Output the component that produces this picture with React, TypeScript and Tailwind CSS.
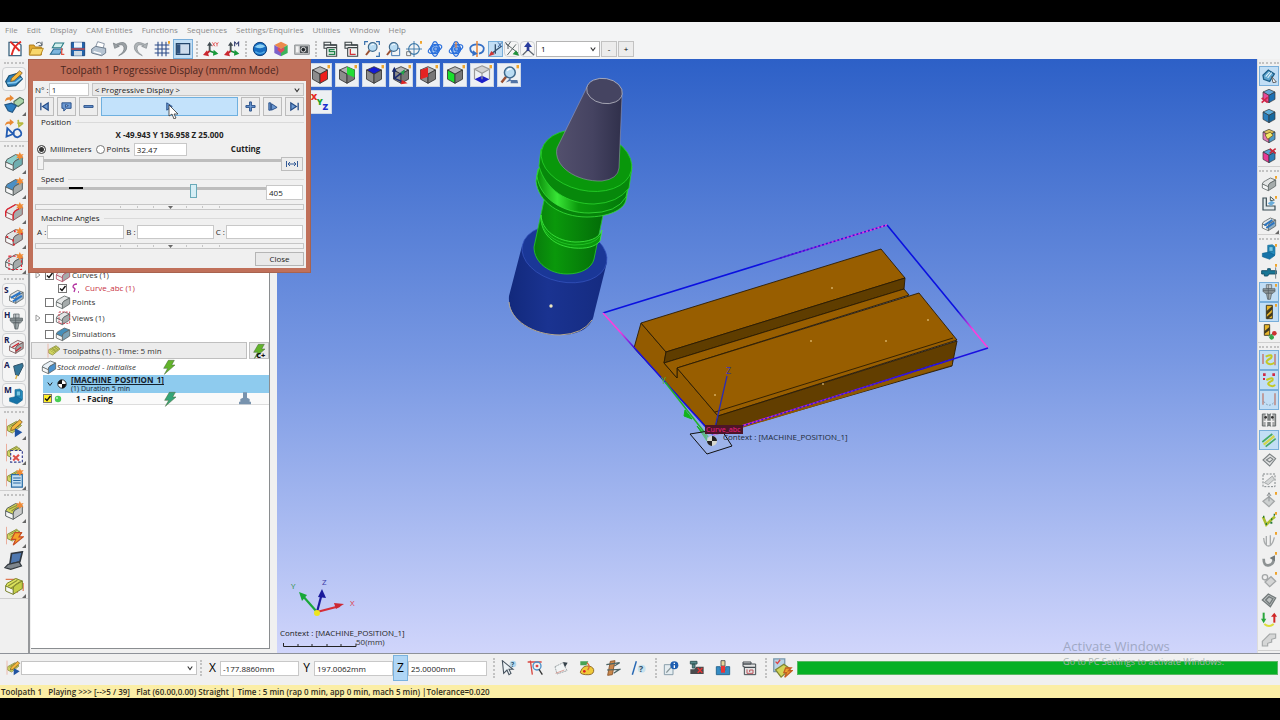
import React from 'react';
import clsx from 'clsx';

interface IconProps {
  children: React.ReactNode;
  size?: 'sm' | 'md' | 'lg';
}

const Icon: React.FC<IconProps> = ({ children, size = 'sm' }) => (
  <svg
    viewBox="0 0 24 24"
    aria-hidden="true"
    fill="none"
    strokeWidth={1.4}
    className={clsx(
      'shrink-0',
      size === 'sm' && 'size-4',
      size === 'md' && 'size-5',
      size === 'lg' && 'size-[22px]'
    )}
  >
    {children}
  </svg>
);

/* ---------- shared drawing parts ---------- */

const Star: React.FC = () => (
  <path d="M19 0l1.4 3 3.2-.6-2 2.6 2 2.6-3.2-.5L19 10l-1.3-2.9-3.2.5 2-2.6-2-2.6 3.1.6z" fill="#f08a35" />
);

const Cube: React.FC<{ top?: string; left?: string; right?: string }> = ({
  top = '#b5b5b5',
  left = '#8c8c8c',
  right = '#777777',
}) => (
  <g stroke="#333" strokeWidth={1}>
    <path d="M12 2l9 4-9 5-9-5z" fill={top} />
    <path d="M3 6l9 5v11l-9-5z" fill={left} />
    <path d="M12 11l9-5v11l-9 5z" fill={right} />
  </g>
);

const Block: React.FC<{ top?: string; side?: string; stroke?: string }> = ({
  top = '#e4e6e6',
  side = '#a5abab',
  stroke = '#5b6262',
}) => (
  <g stroke={stroke} strokeWidth={1.2}>
    <path d="M2 12Q3 8 7 7l7-4 8 3-9 5q-2 2-2 6z" fill={top} />
    <path d="M11 22v-6q0-3 2-5l9-5v9z" fill={side} />
    <path d="M2 12l9 4v6l-9-4z" fill="#f5f6f6" />
  </g>
);

const Path3d: React.FC<{ color?: string }> = ({ color = '#d3d763' }) => (
  <g>
    <path d="M4 10l11-6 6 5-11 9-6-3z" fill={color} stroke="#84883a" strokeWidth={1.1} />
    <path d="M6 11l10-6M8 13l11-7M10 15l10-7M9 8l6 5M13 6l5 5" stroke="#858b36" strokeWidth={0.9} />
    <path d="M3 1v21" stroke="#e8a08c" strokeWidth={1} />
  </g>
);

const Lens: React.FC = () => (
  <g>
    <path d="M8.5 14L3 21" stroke="#9a5133" strokeWidth={3} />
    <circle cx="13" cy="9" r="6.5" fill="#b9dcf3" stroke="#3e698c" strokeWidth={1.8} />
    <path d="M10 7q2-3 5-2" stroke="#fff" strokeWidth={1.5} />
  </g>
);

const Axes: React.FC = () => (
  <g strokeWidth={2.8}>
    <path d="M10 15V5" stroke="#4b5457" />
    <path d="M10 15l8 3" stroke="#168b37" />
    <path d="M10 15l-5 4" stroke="#c0252d" />
    <path d="M6 7l4-6 4 6z" fill="#404a50" />
    <path d="M16 13l7 6-8 3z" fill="#169a3b" />
    <path d="M6 14l-6 7 9 2z" fill="#cb2830" />
  </g>
);

const Bolt: React.FC<{ color?: string }> = ({ color = '#62b42a' }) => (
  <path d="M11 2h9l-4 7h5L5 23l5-9H4z" fill={color} stroke="#496b3c" strokeWidth={0.8} />
);

const Holder: React.FC<{ color?: string }> = ({ color = '#8d9699' }) => (
  <g stroke="#525b5f" strokeWidth={1}>
    <path d="M8 1h8v6H8z" fill="#c4cacc" />
    <path d="M3 7h18v4l-3 3H6l-3-3z" fill={color} />
    <path d="M8 14h8l-2 9h-4z" fill="#a0a8aa" />
    <path d="M3 10h18M11 1v22" />
  </g>
);

const Machine: React.FC = () => (
  <g stroke="#0b5e86" strokeWidth={0.8}>
    <path d="M10 2l7-1 4 3v12l-4 3-7-3z" fill="#258bbe" />
    <path d="M2 14l10-2 9 5-8 6-11-4z" fill="#1673a8" />
    <path d="M12 4h6v7h-6z" fill="#75c5e2" />
  </g>
);

const Pencil: React.FC = () => (
  <path d="M19 2l3 3L12 14l-4 1 1-4z" fill="#f5b83e" stroke="#805b25" strokeWidth={1} />
);

const Dot: React.FC = () => <path d="M21 0h3v4h-3z" fill="#efa52d" />;

/* drawing pushed to the lower right, with its key letter in the free corner */
const Keyed: React.FC<{ letter: string; children: React.ReactNode }> = ({ letter, children }) => (
  <>
    <g transform="translate(5 4) scale(.82)">{children}</g>
    <text x="0" y="9" fontSize="10" fontWeight="700" fill="#172053">{letter}</text>
  </>
);

const Sheet: React.FC<{ color: string; children: React.ReactNode }> = ({ color, children }) => (
  <g stroke="#3d4447">
    <path d="M3 2h10v4h9v17H7V11H3z" fill="#f0f3f2" strokeWidth={1.6} />
    <path d="M3 6h19M7 10h15" strokeWidth={2} />
    <g stroke={color} strokeWidth={2}>{children}</g>
  </g>
);

const Orbit: React.FC = () => (
  <g stroke="#2a6fdc" strokeWidth={1.8}>
    <circle cx="12" cy="12" r="7" fill="#a9cbf5" />
    <ellipse cx="12" cy="12" rx="11" ry="5" transform="rotate(-25 12 12)" />
    <ellipse cx="12" cy="12" rx="5" ry="11" />
    <circle cx="13" cy="12" r="3" fill="#7da7e8" />
  </g>
);

/* ---------- toolbar contents ---------- */

interface Tool {
  label: string;
  art: React.ReactNode;
  active?: boolean;
  boxed?: boolean;
  corner?: boolean;
}

const fileTools: Tool[] = [
  { label: 'New', art: <><path d="M3 2h13l5 4v16H3z" fill="#fff" stroke="#3f6681" strokeWidth="2" /><path d="M5 1l14 14M21 1Q10 7 7 21" stroke="#e22b25" strokeWidth="2.8" /></> },
  { label: 'Open', art: <><path d="M2 6h7l2 3h9v12H2z" fill="#e2a930" stroke="#ac7a1a" /><path d="M6 11h17l-4 10H2z" fill="#f8d76b" stroke="#b4841d" /><path d="M12 4q6-5 9 2M21 1v6h-5" stroke="#4b5660" /></> },
  { label: 'Import', art: <><path d="M5 10l4-7h13l-4 7z" fill="#d2f0ed" stroke="#287983" strokeWidth="1.6" /><path d="M2 20l5-8h13l-4 8z" fill="#7db6de" stroke="#276990" strokeWidth="1.6" /><path d="M19 11v9h4" stroke="#e25645" strokeWidth="2" /></> },
  { label: 'Save', art: <><path d="M2 2h20v20H2z" fill="#2364ac" stroke="#18447d" /><path d="M6 2h12v8H6z" fill="#edf4fb" /><path d="M6 15h12v7H6z" fill="#cfdae3" /><path d="M2 12h20" stroke="#d8423d" strokeWidth="2" /></> },
  { label: 'Print', art: <><path d="M7 9l3-8 10 3-2 8z" fill="#fff" stroke="#8591a1" /><path d="M1 12l6-4 15 3v7l-6 4-15-4z" fill="#b5c3d1" stroke="#687788" /><path d="M4 16l11 3" stroke="#fff" strokeWidth="2" /></> },
  { label: 'Undo', art: <path d="M2 3l2 8 7-3-3-1q9-4 10 3 1 6-8 12 13-5 12-14Q20-2 6 5z" fill="#9ba1a5" stroke="#70777b" strokeWidth="1" /> },
  { label: 'Redo', art: <path d="M22 3l-2 8-7-3 3-1q-9-4-10 3-1 6 8 12-13-5-12-14Q4-2 18 5z" fill="#aeb4b7" stroke="#82888c" strokeWidth="1" /> },
  { label: 'Grid', art: <><path d="M1 6h22M1 12h22M1 18h22M6 1v22M12 1v22M18 1v22" stroke="#2a4987" strokeWidth="1.6" /><Dot /></> },
  { label: 'Tree panel', active: true, art: <><path d="M2 4h20v16H2z" fill="#ccdbec" stroke="#24456a" strokeWidth="1.8" /><path d="M3 5h5v14H3z" fill="#315582" /></> },
];

const planeTools: Tool[] = [
  { label: 'Origin XY', art: <><Axes /><path d="M14 2l4 6M18 2l-4 6M19 2l2 3 2-3M21 5v3" stroke="#e24848" strokeWidth="1.2" /></> },
  { label: 'Origin M', art: <><Axes /><path d="M16 8V1l3 4 3-4v7" stroke="#222e65" strokeWidth="1.5" /></> },
];

const renderTools: Tool[] = [
  { label: 'Shading', art: <><circle cx="12" cy="12" r="10" fill="#156dc1" stroke="#0b3c78" /><path d="M4 9q7-8 16-1-6 5-16 1" fill="#8bd0f4" /><path d="M5 16q7 5 14 0" stroke="#54abe5" strokeWidth="2" /></> },
  { label: 'Colours', art: <><path d="M12 1l10 5-10 6L2 6z" fill="#ec8a4b" /><path d="M2 6l10 6v11L2 18z" fill="#7b61c9" /><path d="M12 12l10-6v12l-10 5z" fill="#3cb35c" /><path d="M7 9l5 3 5-3v5l-5 4-5-4z" fill="#e04a5c" /></> },
  { label: 'Camera', art: <><path d="M1 6h22v14H1z" fill="#c1c3c4" stroke="#8a8f91" /><path d="M9 8h12v10H9z" fill="#4a4f53" /><circle cx="14" cy="13" r="3.5" fill="#22272b" stroke="#e5e5e5" /><path d="M3 8h4v9H3z" fill="#f2f2f2" /></> },
];

const viewTools: Tool[] = [
  { label: 'Save view', art: <Sheet color="#20854b"><path d="M19 13h-8v3h8v4h-9" /></Sheet> },
  { label: 'Layers', art: <Sheet color="#d23439"><path d="M11 12v8h8" /></Sheet> },
  { label: 'Zoom all', art: <><Lens /><path d="M1 6V1h5M18 1h5v5M23 17v6h-5" stroke="#3971ae" strokeWidth="1.8" /></> },
  { label: 'Zoom window', art: <><path d="M10 11h12v11H10z" stroke="#3971ae" /><Lens /></> },
  { label: 'Centre', art: <><circle cx="12" cy="12" r="8" stroke="#3d79aa" strokeWidth="1.7" /><path d="M12 0v24M0 12h24" stroke="#3d79aa" /><path d="M1 16h6v6H1z" stroke="#696f73" /><Dot /></> },
  { label: 'Rotate free', art: <Orbit /> },
  { label: 'Rotate view', art: <><Orbit /><path d="M12 1v9" stroke="#eb8844" strokeWidth="2" /></> },
  { label: 'Rotate axis', art: <><path d="M9 19Q1 17 2 10 4 5 12 5t10 5q1 7-7 9" stroke="#346fc6" strokeWidth="2.6" /><path d="M12 0v24" stroke="#e88b40" strokeWidth="2.4" /><path d="M6 14l7 5-8 4z" fill="#346fc6" /></> },
];

const axisTools: Tool[] = [
  { label: 'Align X', active: true, art: <><path d="M4 20L20 8M11 5v14" stroke="#35506c" strokeWidth="2" /><path d="M1 23l4-8 5 5z" fill="#cc3536" /><path d="M15 2l6 7M21 2l-6 7" stroke="#315c97" /></> },
  { label: 'Align Y', boxed: true, art: <><path d="M3 4l18 14M5 21L18 5" stroke="#5c6767" strokeWidth="1.5" /><path d="M23 22l-10-2 5-6z" fill="#20913c" /><path d="M2 2l4 5 4-6M6 7v5" stroke="#4a545b" /></> },
  { label: 'Align Z', boxed: true, art: <><path d="M12 13l-8 8M12 13l9 8" stroke="#636b75" strokeWidth="2" /><path d="M6 9l6-8 6 8z" fill="#283c9e" /><path d="M12 8v7" stroke="#293a96" strokeWidth="4" /></> },
];

const leftGroups: Tool[][] = [
  [
    { label: 'Edit geometry', boxed: true, art: <><path d="M2 15l4-7 11-3 5 7-8 8-9 1z" fill="#2c7fba" stroke="#195073" /><path d="M4 17l10-1 7-5" stroke="#85caef" strokeWidth="2" /><Pencil /></> },
    { label: 'Copy solid', corner: true, art: <><path d="M1 9q1-6 6-5V1l5 4-5 4V7Q4 6 1 9" fill="#e98a35" /><path d="M12 9l7-5 5 3v3l-7 5-5-3z" fill="#a9d3a9" stroke="#516c57" /><path d="M1 13l8-2 6 3-5 8-5-2z" fill="#2d7fc3" stroke="#235784" /></> },
    { label: 'Copy curve', art: <><path d="M1 8q1-6 6-5V0l5 4-5 4V6Q4 5 1 8" fill="#e98a35" /><path d="M4 11l-1 10 8-3zM12 14q5-4 8 1t-4 7q-6-1-4-8" stroke="#245db3" strokeWidth="2.2" /><path d="M17 1l1 8 5-4M16 5h7" stroke="#b6b73d" strokeWidth="2" /></> },
  ],
  [
    { label: 'Solid', corner: true, art: <><Block top="#8fd0cd" side="#6faeb0" /><Star /></> },
    { label: 'Surface', corner: true, art: <><Block top="#4b8fc5" /><Star /></> },
    { label: 'Curve', corner: true, art: <><Block stroke="#8f6262" /><path d="M2 17v-5Q3 8 7 7l7-4M11 21v-5q0-3 2-5l8-5" stroke="#df2432" strokeWidth="1.6" /><Star /></> },
    { label: 'Point', corner: true, art: <><Block stroke="#745f5f" /><path d="M3 12h2M12 5h2M10 16h2M20 8h2M11 21h2" stroke="#e1222d" strokeWidth="2.5" /><Star /></> },
    { label: 'View', corner: true, art: <><Block /><path d="M6 5h15v16H6z" stroke="#e12e3b" strokeDasharray="3 2" /><Star /></> },
  ],
  [
    { label: 'Stock', boxed: true, art: <Keyed letter="S"><Block side="#a8bfd2" /><path d="M4 14l14-8M7 19l13-8" stroke="#2875c8" strokeWidth="3.2" /></Keyed> },
    { label: 'Holder', boxed: true, art: <Keyed letter="H"><Holder /></Keyed> },
    { label: 'Rework', boxed: true, art: <Keyed letter="R"><Block stroke="#714e4e" /><path d="M6 13l10-6M11 19l8-6" stroke="#cc2832" strokeWidth="2" /></Keyed> },
    { label: 'Attachment', boxed: true, art: <Keyed letter="A"><path d="M8 4l13-4 1 4-7 14-4-1z" fill="#357799" stroke="#315065" /><path d="M13 17l-2 6" stroke="#ddb245" strokeWidth="2" /></Keyed> },
    { label: 'Machine', boxed: true, art: <Keyed letter="M"><Machine /></Keyed> },
  ],
  [
    { label: 'Toolpath', corner: true, art: <><Path3d /><path d="M13 12l9 5-9 6z" fill="#2154a1" /><Pencil /></> },
    { label: 'Delete toolpath', corner: true, art: <><Path3d /><path d="M8 9h14v14H8z" fill="#f7f7fd" stroke="#353f8d" strokeDasharray="3 2" /><path d="M11 15l7 6M18 14l-7 7" stroke="#dd5148" strokeWidth="2.5" /></> },
    { label: 'Toolpath list', corner: true, art: <><Path3d /><path d="M9 8h13v15H9z" fill="#c5dff2" stroke="#286ba4" /><path d="M11 12h9M11 15h9M11 18h9" stroke="#2869a3" /><Star /></> },
  ],
  [
    { label: 'Machining', corner: true, art: <><Block top="#cfd357" side="#c9cbcb" /><path d="M6 10l10-5M9 12l9-6" stroke="#8a8e3b" /><Star /></> },
    { label: 'Calculate', corner: true, art: <><Path3d /><path d="M13 8h8l-3 5h5L11 23l3-7H9z" fill="#f4a329" stroke="#c84b25" /></> },
    { label: 'Post processor', art: <><path d="M9 3l13-2-3 12-12 3z" fill="#4f78b0" stroke="#303740" strokeWidth="2" /><path d="M5 16l13-3 3 5-13 4-7-2z" fill="#7f868c" stroke="#32383e" /></> },
    { label: 'Part', corner: true, art: <><path d="M2 4h14v16M18 9h5v9" stroke="#de7750" /><Block top="#dce35e" side="#c5cf46" stroke="#7b842c" /><path d="M5 12l11-7M8 15l11-8" stroke="#8c9235" /></> },
  ],
];

const ghost = '#a4a7a8';

const rightGroups: Tool[][] = [
  [
    { label: 'Pick surface', active: true, art: <><path d="M3 11l8-8 9 6-7 11-9-3z" fill="#5fa6d0" stroke="#1b5d87" strokeWidth="2" /><path d="M7 13l6-7M10 15l6-8" stroke="#e5f3fa" strokeWidth="1.6" /><path d="M16 13l7 8-5 1z" fill="#fff" stroke="#555" /></> },
    { label: 'Delete faces', art: <><Cube top="#61a7d7" left="#e74a98" right="#1d70b4" /><path d="M1 15l9 7M10 14l-9 8" stroke="#d22648" strokeWidth="2.5" /></> },
    { label: 'Faces', art: <Cube top="#5eaddb" left="#2b7fbd" right="#17689f" /> },
    { label: 'Mixed faces', art: <><Cube top="#ddc15b" left="#e177b6" right="#4d99c7" /><path d="M6 10l8-4 4 5-8 6z" fill="#edea68" stroke="#82622c" /></> },
    { label: 'Hide faces', art: <><Cube top="#55a4d4" left="#e63b96" right="#2c7db8" /><path d="M13 1l9 7M22 1l-9 7" stroke="#c92638" strokeWidth="2.3" /></> },
  ],
  [
    { label: 'Solid view', art: <><Block /><Dot /></> },
    { label: 'Fixture', art: <><path d="M3 3v18h18v-6H8V3z" fill="#e3e9eb" stroke="#3a4d55" strokeWidth="1.8" /><path d="M10 11l6-4 5 3-6 5z" fill="#6badda" /><path d="M14 1l6 5-6 1z" stroke="#455" /><Dot /></> },
    { label: 'Stock view', corner: true, art: <><Block side="#91aec5" /><path d="M5 14l12-8M8 18l12-8" stroke="#2c75bf" strokeWidth="3" /></> },
  ],
  [
    { label: 'Show machine', art: <><Machine /><Dot /></> },
    { label: 'Show arm', art: <><path d="M1 10h9V7h4v3h9v5H12l-2 3H5v-3H1z" fill="#187695" stroke="#145068" /><path d="M22 5v17" stroke="#69777c" /><Dot /></> },
    { label: 'Show holder', active: true, art: <><Holder /><Dot /></> },
    { label: 'Show tool', active: true, art: <><path d="M8 2h9v20H8z" fill="#e8b429" stroke="#383324" /><path d="M8 11l9-8v5l-9 9zM8 20l9-8v5l-7 6z" fill="#403921" /><Dot /></> },
    { label: 'Tool colour', art: <><path d="M5 1h8v16H5z" fill="#e6b52a" stroke="#443b25" /><path d="M5 11l8-7v5l-8 6z" fill="#403921" /><path d="M11 18l7-3" stroke="#4a9a54" strokeWidth="2" /><circle cx="20" cy="14" r="3.5" fill="#ca3131" /><circle cx="16" cy="20" r="3.5" fill="#34a34b" /></> },
  ],
  [
    { label: 'Path', active: true, art: <><path d="M3 3v15M21 3v17" stroke="#c55542" strokeWidth="1.6" /><path d="M7 7q12-5 8 2-10 5-5 8t10-1" stroke="#c3c926" strokeWidth="3" /></> },
    { label: 'Path points', active: true, art: <><path d="M3 2h4v4H3zM17 2h4v4h-4zM3 9h3v3H3z" fill="#cf2b47" /><path d="M8 12q12-6 9 1-10 4-4 7t8-1" stroke="#c3c926" strokeWidth="3" /></> },
    { label: 'Approach', active: true, art: <><path d="M3 2v17M21 2v18" stroke="#bb6655" strokeWidth="1.6" /><path d="M4 14q8 11 16 1" stroke="#789ab0" strokeDasharray="3 2" /></> },
    { label: 'Compare', art: <><path d="M2 3h9v18H2zM13 3h9v18h-9z" fill="#a7a9a9" stroke="#626868" /><path d="M8 2v20M16 2v20M4 14h16" stroke="#f0f0f0" strokeWidth="2" /><circle cx="7" cy="8" r="2" fill="#333" /><circle cx="17" cy="8" r="2" fill="#333" /></> },
    { label: 'Passes', active: true, art: <><path d="M2 15L17 3M7 22L22 10" stroke="#45a966" strokeWidth="2.5" /><path d="M4 19L20 6" stroke="#d3d54b" strokeWidth="3.5" /></> },
    { label: 'Diamond', art: <path d="M3 12l10-9 9 7-9 11zM8 12l6-4 4 3-5 4z" fill="#dfe0e0" stroke="#7c8284" strokeWidth="1.6" /> },
    { label: 'Limit', art: <><path d="M3 3h18v19H3z" stroke="#767d80" strokeDasharray="3 2" /><path d="M5 16L17 6l3 5-9 8z" fill="#d4d6d6" stroke={ghost} /></> },
    { label: 'Raise', art: <><path d="M3 14l9-7 8 7-8 8z" fill="#cdd0d0" stroke={ghost} strokeWidth="2" /><path d="M12 2v12M9 6l3-5 3 5" stroke="#8a8f91" /><Dot /></> },
    { label: 'Smooth', art: <><path d="M3 7l5 12 9-9 4-3" stroke="#aabd2f" strokeWidth="4" /><path d="M3 7h2M7 18h2M15 11h2M19 4h2M14 16h3" stroke="#267a37" strokeWidth="3" /><Dot /></> },
    { label: 'Links', art: <><path d="M4 9q1 12 7 12t9-13M8 20V6M14 20V5" stroke="#a8abac" strokeWidth="2" /><Dot /></> },
    { label: 'Arc', art: <><path d="M4 10q0 11 7 10 8-1 8-9" stroke="#8d9293" strokeWidth="4" /><path d="M13 9l8-4v9z" fill="#71787a" /><Dot /></> },
    { label: 'Cut', art: <><circle cx="6" cy="8" r="4" stroke={ghost} strokeWidth="2" /><path d="M6 15l9-8 7 7-9 8z" fill="#d4d5d5" stroke={ghost} strokeWidth="2" /><Dot /></> },
    { label: 'Pocket', art: <path d="M2 12L11 3l11 6-8 13zM7 12l5-5 6 3-5 8z" fill="#bec2c2" stroke="#737a7b" strokeWidth="2" /> },
    { label: 'Swap', art: <><path d="M4 1v12" strokeWidth="3" stroke="#29a63c" /><path d="M20 16V4" stroke="#cf2727" strokeWidth="3" /><path d="M0 10h8l-4 7z" fill="#29a63c" /><path d="M15 7l5-6 4 6z" fill="#cf2727" /><path d="M5 18q7 6 14 0" stroke="#dddc39" strokeWidth="3" /></> },
    { label: 'Steps', art: <path d="M2 14L13 3h9v6l-6 2v4l-6 2v4H2z" fill="#d5d6d6" stroke={ghost} strokeWidth="1.7" /> },
  ],
];

const cubeTools: Tool[] = [
  { label: 'Right view', art: <><Cube right="#ed1c1c" /><Dot /></> },
  { label: 'Rear view', art: <><Cube /><path d="M12 2l9 4v9l-9-4z" fill="#22dd35" /><Dot /></> },
  { label: 'Top view', art: <><Cube top="#151bd4" /><Dot /></> },
  { label: 'Isometric view', art: <><Cube /><path d="M4 5v11l12 5M4 16l12-9" stroke="#1a2a6f" strokeWidth="1.8" /><path d="M13 18l7 4-8 1z" fill="#df2525" /><path d="M11 9l6-4-2 7z" fill="#25a348" /><path d="M1 8l3-6 3 6z" fill="#1a2a6f" /><Dot /></> },
  { label: 'Left view', art: <><Cube /><path d="M3 6l9-3v11l-9 3z" fill="#e52222" /><Dot /></> },
  { label: 'Front view', art: <><Cube left="#19e02c" /><Dot /></> },
  { label: 'Bottom view', art: <><path d="M12 1l9 4-9 5-9-5z" fill="#d2d2d2" stroke="#999" /><path d="M3 5v12M21 5v12" stroke="#999" /><path d="M12 13l9 4-9 5-9-5z" fill="#1c20c8" /><path d="M12 10v7" stroke="#999" /><Dot /></> },
  { label: 'Previous view', art: <><Lens /><path d="M23 22h-9v-3l-6 2 6-6v3h8z" fill="#5375a6" /><Dot /></> },
];

const queryTools: Tool[] = [
  { label: 'Query', art: <><path d="M2 1l2 19 5-5 3 7 3-2-3-6h6z" fill="#edf2f5" stroke="#46525e" strokeWidth="1.6" /><circle cx="18" cy="6" r="5" fill="#b3d6eb" /><text x="15" y="10" fontSize="10" fontWeight="700" fill="#26546e">?</text></> },
  { label: 'Query path', art: <><path d="M1 3h21M5 1l3 21" stroke="#d74741" strokeWidth="2" /><circle cx="15" cy="9" r="6" stroke="#4c91c9" strokeWidth="2" /><path d="M13 9h4M15 7v4" stroke="#d33" strokeWidth="2" /><path d="M18 14l5 8" stroke="#333" strokeWidth="2" /></> },
  { label: 'Sketch', art: <><path d="M3 10l12-6 6 12-15 5z" fill="#f1f4f5" stroke="#9aa1a4" strokeDasharray="3 1" /><path d="M15 3l7 1-4 7z" fill="#35414a" /><path d="M4 20l13-5" stroke="#d99a91" /></> },
  { label: 'Palette', art: <><path d="M2 2h12l-3 6H2z" fill="#46a256" /><path d="M3 16q3-8 12-7 8 2 7 8t-12 5-7-6" fill="#f0c939" stroke="#8b6424" /><path d="M12 4q6 5 1 11" stroke="#d8673c" strokeWidth="2" /><circle cx="8" cy="17" r="2" fill="#d22" /></> },
  { label: 'Measure', art: <><path d="M8 2l7-1-4 21-7 1z" fill="#c9874c" stroke="#8c572d" /><path d="M2 7l20-3-8 5M3 15l19-1-9 6" stroke="#4a6263" strokeWidth="1.8" /></> },
  { label: 'Line query', art: <><path d="M8 2L2 22" stroke="#2869b4" strokeWidth="2.2" /><circle cx="16" cy="13" r="6" fill="#c5e1ee" /><text x="12" y="18" fontSize="13" fontWeight="700" fill="#334d68">?</text></> },
];

const infoTools: Tool[] = [
  { label: 'Information', art: <><path d="M2 7h13v15H2z" fill="#e4ecf0" stroke="#8299a6" /><path d="M5 19l8-9" stroke="#889698" strokeWidth="2" /><circle cx="17" cy="8" r="6" fill="#1e5db0" /><path d="M17 4v2M17 8v4" stroke="#fff" strokeWidth="2" /></> },
  { label: 'Cutting', art: <><path d="M2 2h10v4H2zM5 6h4v6H5z" fill="#558889" stroke="#355" /><path d="M2 14h6l3-4h11v11H2z" fill="#4a4b4d" /><path d="M13 12l7 7M20 12l-7 7" stroke="#e33" strokeWidth="2" /></> },
  { label: 'Collision', art: <><path d="M2 10h6v5h8v-5h6v12H2z" fill="#338bc4" stroke="#28658e" /><path d="M9 1h6v8H9z" fill="#e7d69b" stroke="#555" /><path d="M9 9h6v10H9z" fill="#ed3434" /></> },
  { label: 'Report', art: <><path d="M3 3h12v3h7v16H5V10H3z" fill="#e4e5e5" stroke="#444b50" strokeWidth="1.5" /><path d="M3 6h12M5 11h16" stroke="#444b50" strokeWidth="2" /><path d="M9 14v6h9v-5h-5v3" stroke="#b94953" /></> },
];

const Grip: React.FC = () => (
  <span className="mx-[3px] h-4 w-0 shrink-0 border-l-2 border-dotted border-[#c2c2c2]" />
);

const WideGrip: React.FC = () => (
  <span className="mr-1 ml-[6px] h-5 w-0 shrink-0 border-l-2 border-dotted border-[#c2c2c2]" />
);

const Handle: React.FC = () => (
  <span className="mt-[3px] mb-[2px] h-0 w-5 shrink-0 border-t-2 border-dotted border-[#c2c2c2]" />
);

const ToolButton: React.FC<{ tool: Tool; size: 'h' | 'left' | 'right' | 'view' | 'small' }> = ({ tool, size }) => (
  <button
    type="button"
    aria-label={tool.label}
    className={clsx(
      'relative flex shrink-0 items-center justify-center',
      size === 'h' && 'size-5',
      size === 'small' && 'h-4 w-[15px]',
      size === 'left' && 'size-6',
      size === 'right' && 'h-5 w-5',
      size === 'view' && 'size-6 border border-[#cbd5e6] bg-[#edf0f3]',
      tool.boxed && 'rounded-sm border border-[#cfd1d3] bg-[#f5f5f5]',
      tool.active && 'border border-[#78aeda] bg-[#c2def5]'
    )}
  >
    <Icon size={size === 'left' || size === 'view' ? 'md' : 'sm'}>{tool.art}</Icon>
    {tool.corner && (
      <span className="absolute right-0 bottom-0 border-[2px] border-transparent border-r-[#666] border-b-[#666]" />
    )}
  </button>
);

const menus = [
  'File', 'Edit', 'Display', 'CAM Entities', 'Functions',
  'Sequences', 'Settings/Enquiries', 'Utilities', 'Window', 'Help',
];

const Chevron: React.FC = () => (
  <svg viewBox="0 0 8 8" aria-hidden="true" className="pointer-events-none absolute right-1 size-[6px]">
    <path d="M1 2l3 4 3-4" fill="none" stroke="#333" strokeWidth={1.5} />
  </svg>
);

const TopBar: React.FC = () => (
  <header className="shrink-0 bg-[#f3f4f5]">
    <nav className="flex h-4 items-center gap-[9px] pl-[5px] text-[8px] text-[#8b8b8b]">
      {menus.map((menu) => (
        <button key={menu} type="button">{menu}</button>
      ))}
    </nav>
    <div className="flex h-[21px] items-center">
      <div className="flex items-center gap-px pl-[5px]">
        {fileTools.map((tool) => <ToolButton key={tool.label} tool={tool} size="h" />)}
      </div>
      <Grip />
      <div className="flex items-center gap-px">
        {planeTools.map((tool) => <ToolButton key={tool.label} tool={tool} size="h" />)}
      </div>
      <Grip />
      <div className="flex items-center gap-px">
        {renderTools.map((tool) => <ToolButton key={tool.label} tool={tool} size="h" />)}
      </div>
      <Grip />
      <div className="flex items-center gap-px">
        {viewTools.map((tool) => <ToolButton key={tool.label} tool={tool} size="h" />)}
      </div>
      <div className="flex items-center gap-px pl-px">
        {axisTools.map((tool) => <ToolButton key={tool.label} tool={tool} size="small" />)}
        <div className="relative flex items-center">
          <select aria-label="Level" defaultValue="1" className="h-4 w-16 appearance-none border border-[#b4b4b4] bg-white pl-1 text-[8px] leading-3">
            <option>1</option>
          </select>
          <Chevron />
        </div>
        <button type="button" className="h-4 w-4 border border-[#c2c2c2] bg-[#ececec] text-[8px] leading-3">-</button>
        <button type="button" className="h-4 w-4 border border-[#c2c2c2] bg-[#ececec] text-[8px] leading-3">+</button>
      </div>
    </div>
  </header>
);

const LeftBar: React.FC = () => (
  <aside className="flex w-7 shrink-0 flex-col bg-[#f0f0f0]">
    {leftGroups.map((group, index) => (
      <div key={index} className="flex flex-col items-center gap-px border-b border-[#cfcfcf]">
        <Handle />
        {group.map((tool) => <ToolButton key={tool.label} tool={tool} size="left" />)}
      </div>
    ))}
  </aside>
);

const RightBar: React.FC = () => (
  <aside className="flex w-[23px] shrink-0 flex-col overflow-hidden border-l border-[#dcdcdc] bg-[#f0f0f0]">
    {rightGroups.map((group, index) => (
      <div key={index} className="flex flex-col items-center border-b border-[#cfcfcf]">
        <Handle />
        {group.map((tool) => <ToolButton key={tool.label} tool={tool} size="right" />)}
      </div>
    ))}
  </aside>
);

/* ---------- entity tree ---------- */

const TreeCheck: React.FC<{ checked?: boolean; yellow?: boolean }> = ({ checked = false, yellow }) => (
  <span className="relative flex size-[9px] shrink-0">
    <input
      type="checkbox"
      defaultChecked={checked}
      aria-label="Visible"
      className={clsx('peer size-[9px] appearance-none border border-[#777]', yellow ? 'bg-[#ffef26]' : 'bg-white')}
    />
    <svg viewBox="0 0 9 9" aria-hidden="true" className="pointer-events-none absolute inset-0 hidden size-[9px] peer-checked:block">
      <path d="M2 4.5l2 2 3.5-4.5" fill="none" stroke="#111" strokeWidth={1.4} />
    </svg>
  </span>
);

interface BranchProps {
  label: string;
  art: React.ReactNode;
  checked?: boolean;
  expandable?: boolean;
}

const Branch: React.FC<BranchProps> = ({ label, art, checked = false, expandable }) => (
  <div className="flex h-4 items-center gap-1 pl-1">
    <svg viewBox="0 0 6 8" aria-hidden="true" className="h-2 w-[6px]">
      {expandable && <path d="M1 1l4 3-4 3z" fill="none" stroke="#999" />}
    </svg>
    <label className="flex items-center gap-px">
      <TreeCheck checked={checked} />
      <Icon>{art}</Icon>
      <span>{label}</span>
    </label>
  </div>
);

const TreePanel: React.FC = () => (
  <section className="flex w-[249px] shrink-0 flex-col border-l-2 border-[#96989b] bg-[#f0f0f0] pr-[7px] pb-1 pl-px text-[8px] text-[#333]">
    <div className="flex-1 border-r border-b border-[#8a8d90] bg-white pt-[208px]">
      <Branch label="Curves (1)" checked expandable art={<Block stroke="#b34a64" />} />
      <label className="flex h-[10px] items-center gap-[5px] pl-[27px] text-[#c72f42]">
        <TreeCheck checked />
        <svg viewBox="0 0 8 10" aria-hidden="true" className="h-[10px] w-2">
          <path d="M5 1Q1 1 1 4l2 2-1 3M6 9h1" fill="none" stroke="#b332a0" strokeWidth={1.3} />
        </svg>
        Curve_abc (1)
      </label>
      <div className="pt-px">
        <Branch label="Points" art={<Block />} />
        <Branch label="Views (1)" expandable art={<><Block /><path d="M6 3h16v17H6z" stroke="#d23d4d" strokeDasharray="3 2" /></>} />
        <Branch label="Simulations" art={<Block top="#448eba" side="#7ba2b6" />} />
      </div>
      <div className="flex h-[17px] items-stretch gap-[2px]">
        <button type="button" className="flex flex-1 items-center gap-px border border-[#bfbfbf] bg-[#ececec] pl-[14px]">
          <Icon><Path3d /></Icon>
          Toolpaths (1) - Time: 5 min
        </button>
        <button type="button" aria-label="Calculate all" className="flex w-5 items-center justify-center border border-[#bfbfbf] bg-[#e9e9e9]">
          <Icon>
            <Bolt />
            <text x="8" y="23" fontSize="11" fontWeight="800" fill="#111">C+</text>
          </Icon>
        </button>
      </div>
      <div className="flex h-4 items-center pl-[10px] italic">
        <Icon><Block top="#e8f0f6" side="#4a91cc" /></Icon>
        <span className="w-[104px]">Stock model - Initialise</span>
        <Icon><Bolt /></Icon>
      </div>
      <div className="ml-3 flex h-[18px] items-center gap-1 bg-[#8ecbee] pl-1 text-[#14202c]">
        <svg viewBox="0 0 8 8" aria-hidden="true" className="size-[6px]">
          <path d="M1 2l3 4 3-4" fill="none" stroke="#222" strokeWidth={1.3} />
        </svg>
        <svg viewBox="0 0 12 12" aria-hidden="true" className="size-[10px]">
          <circle cx="6" cy="6" r="5" fill="#fff" stroke="#111" />
          <path d="M6 6V1a5 5 0 0 0-5 5zM6 6v5a5 5 0 0 0 5-5z" fill="#111" />
        </svg>
        <div className="flex flex-col leading-[9px]">
          <span className="font-bold underline">[MACHINE_POSITION_1]</span>
          <span className="text-[7px]">(1) Duration 5 min</span>
        </div>
      </div>
      <div className="ml-3 flex h-3 items-center gap-[2px] border-b border-[#ddd] bg-[#fafafa]">
        <TreeCheck checked yellow />
        <svg viewBox="0 0 8 8" aria-hidden="true" className="size-2">
          <circle cx="4" cy="4" r="3.2" fill="#48cd55" />
          <circle cx="3" cy="3" r="1" fill="#bdf4c2" />
        </svg>
        <span className="w-[96px] pl-3 font-bold text-[#222]">1 - Facing</span>
        <Icon><Bolt color="#35a577" /></Icon>
        <span className="ml-auto pr-4">
          <Icon><path d="M9 2h6v8l4 2v4h2v4H3v-4h2v-4l4-2z" fill="#7893ae" /></Icon>
        </span>
      </div>
    </div>
  </section>
);

/* ---------- progressive display dialog ---------- */

const StepButton: React.FC<{ label: string; children: React.ReactNode }> = ({ label, children }) => (
  <button type="button" aria-label={label} className="flex h-[19px] w-[19px] shrink-0 items-center justify-center border border-[#bcbcbc] bg-[#ededed]">
    <svg viewBox="0 0 12 12" aria-hidden="true" className="size-[11px]" fill="#6d9ad3" stroke="#244b86" strokeWidth={1}>
      {children}
    </svg>
  </button>
);

const Legend: React.FC<{ children: string }> = ({ children }) => (
  <div className="flex h-3 items-center gap-1 pl-[6px]">
    <span>{children}</span>
    <span className="h-px flex-1 bg-[#dadada]" />
  </div>
);

const Fold: React.FC<{ label: string }> = ({ label }) => (
  <button type="button" aria-label={label} className="flex h-[6px] w-full items-center justify-center border border-[#c6c6c6] bg-[#f2f2f2]">
    <svg viewBox="0 0 100 6" aria-hidden="true" className="h-[6px] w-[100px]">
      <path d="M0 3h1M17 3h1M33 3h1M66 3h1M82 3h1M99 3h1" stroke="#999" />
      <path d="M48 2h5l-2.500 3z" fill="#666" />
    </svg>
  </button>
);

const sliderClass =
  'h-[7px] w-full self-start appearance-none bg-transparent [&::-webkit-slider-runnable-track]:h-[3px] [&::-webkit-slider-runnable-track]:bg-[#bdbdbd] [&::-webkit-slider-thumb]:-mt-[3px] [&::-webkit-slider-thumb]:h-[14px] [&::-webkit-slider-thumb]:w-[7px] [&::-webkit-slider-thumb]:appearance-none [&::-webkit-slider-thumb]:border';

const ProgressDialog: React.FC = () => (
  <section role="dialog" aria-labelledby="dialog-title" className="absolute top-0 left-7 z-10 flex w-[283px] flex-col border border-[#a8634f] bg-[#c0705a] px-1 pb-1 text-[8px] text-[#222]">
    <h1 id="dialog-title" className="h-[21px] text-center text-[10px] leading-5 text-[#4b2620]">
      Toolpath 1 Progressive Display (mm/mn Mode)
    </h1>
    <div className="flex flex-col bg-[#f0f0f0] p-[2px]">
      <div className="flex items-center gap-[3px]">
        <label className="flex items-center">
          N° :
          <input type="text" defaultValue="1" className="h-[13px] w-10 border border-[#c8c8c8] bg-white px-[2px]" />
        </label>
        <div className="relative flex flex-1 items-center">
          <select aria-label="Display mode" defaultValue="p" className="h-[13px] w-full appearance-none border border-[#c4c4c4] bg-[#e9e9e9] pl-[2px] leading-[11px]">
            <option value="p">&lt; Progressive Display &gt;</option>
          </select>
          <Chevron />
        </div>
      </div>
      <div className="flex items-center gap-[3px] pt-px">
        <StepButton label="Start"><path d="M2 2v8M10 2v8L4 6z" strokeWidth={1.4} /></StepButton>
        <StepButton label="Loop"><path d="M1 2h10v6H6l-3 3V8H1z" /><path d="M5 4l3 1-3 2z" fill="#fff" /></StepButton>
        <StepButton label="Slower"><path d="M1 5h10v2H1z" /></StepButton>
        <button type="button" aria-label="Play" className="flex h-[19px] flex-1 items-center justify-center border border-[#6fb0df] bg-[#c3e2fb]">
          <svg viewBox="0 0 12 12" aria-hidden="true" className="size-[11px]">
            <path d="M3 2l6 4-6 4z" fill="#6d9ad3" stroke="#244b86" />
          </svg>
        </button>
        <StepButton label="Faster"><path d="M5 1h2v4h4v2H7v4H5V7H1V5h4z" /></StepButton>
        <StepButton label="Step"><path d="M2 2v8h2V2zM5 3l6 4-6 3z" /></StepButton>
        <StepButton label="End"><path d="M10 2v8M2 2v8l6-4z" strokeWidth={1.4} /></StepButton>
      </div>
      <Legend>Position</Legend>
      <output className="h-[14px] text-center leading-[14px] font-bold">X -49.943 Y 136.958 Z 25.000</output>
      <div className="flex h-[14px] items-center gap-1 pl-[2px]">
        <label className="flex items-center gap-1">
          <input type="radio" name="unit" defaultChecked className="size-[9px] appearance-none rounded-full border border-[#555] bg-[#333] shadow-[inset_0_0_0_1px_white]" />
          Millimeters
        </label>
        <label className="flex items-center gap-[2px]">
          <input type="radio" name="unit" className="size-[9px] appearance-none rounded-full border border-[#777] bg-white" />
          Points
        </label>
        <input type="text" aria-label="Distance" defaultValue="32.47" className="h-[13px] w-[53px] border border-[#c8c8c8] bg-white px-[2px]" />
        <strong className="pl-10">Cutting</strong>
      </div>
      <div className="flex items-center pt-px pr-px pl-[2px]">
        <input type="range" aria-label="Position" min={0} max={1000} defaultValue={2} className={clsx(sliderClass, '[&::-webkit-slider-thumb]:border-[#c2c2c2] [&::-webkit-slider-thumb]:bg-[#f2f2f2]')} />
        <button type="button" aria-label="Limits" className="flex h-[14px] w-[22px] shrink-0 items-center justify-center border border-[#bdbdbd] bg-[#ececec]">
          <svg viewBox="0 0 14 8" aria-hidden="true" className="h-2 w-[14px]" stroke="#335a96" fill="none">
            <path d="M1.500 1v6M12.500 1v6M3 4h8M5 2L3 4l2 2M9 2l2 2-2 2" />
          </svg>
        </button>
      </div>
      <div className="pt-[2px]"><Legend>Speed</Legend></div>
      <div className="flex items-center pr-px pl-[2px]">
        <div className="relative flex flex-1 self-start">
          <input type="range" aria-label="Speed" min={0} max={1000} defaultValue={690} className={clsx(sliderClass, '[&::-webkit-slider-thumb]:border-[#6aaab9] [&::-webkit-slider-thumb]:bg-[#d6eef5]')} />
          <span className="absolute top-[2px] left-8 h-[2px] w-[14px] bg-black" />
        </div>
        <input type="text" aria-label="Speed value" defaultValue="405" className="h-[15px] w-[37px] border border-[#c8c8c8] bg-white px-[2px]" />
      </div>
      <div className="pt-1 pb-[2px]"><Fold label="Fold speed" /></div>
      <Legend>Machine Angles</Legend>
      <div className="flex items-center gap-[2px] pt-px pr-px pl-[2px]">
        {['A :', 'B :', 'C :'].map((axis) => (
          <label key={axis} className="flex flex-1 items-center gap-px whitespace-nowrap">
            {axis}
            <input type="text" className="h-[14px] w-full min-w-0 border border-[#c8c8c8] bg-white" />
          </label>
        ))}
      </div>
      <div className="pt-1"><Fold label="Fold angles" /></div>
      <div className="flex justify-end pt-[3px]">
        <button type="button" className="h-[14px] w-[49px] border border-[#b5b5b5] bg-[#e9e9e9] leading-3">Close</button>
      </div>
    </div>
    <svg viewBox="0 0 10 14" aria-hidden="true" className="absolute top-[45px] left-[139px] h-[14px] w-[10px]">
      <path d="M1 0v11l3-2 2 5 2-1-2-4h4z" fill="#fff" stroke="#333" strokeWidth={0.8} />
    </svg>
  </section>
);

/* ---------- 3D view ---------- */

const Scene: React.FC = () => (
  <svg viewBox="277 59 980 594" role="img" aria-label="Part and tool" className="absolute inset-0 h-full w-full">
    <defs>
      <linearGradient id="cone">
        <stop offset="0" stopColor="#53506d" />
        <stop offset=".55" stopColor="#454361" />
        <stop offset="1" stopColor="#30304b" />
      </linearGradient>
      <linearGradient id="green">
        <stop offset="0" stopColor="#087c0c" />
        <stop offset=".3" stopColor="#0a980b" />
        <stop offset="1" stopColor="#036c08" />
      </linearGradient>
      <linearGradient id="flange">
        <stop offset="0" stopColor="#0a8c0a" />
        <stop offset=".22" stopColor="#39e536" />
        <stop offset=".45" stopColor="#0a980b" />
        <stop offset="1" stopColor="#03760a" />
      </linearGradient>
      <linearGradient id="navy">
        <stop offset="0" stopColor="#12297c" />
        <stop offset=".4" stopColor="#1a3391" />
        <stop offset="1" stopColor="#152b80" />
      </linearGradient>
      <linearGradient id="edge1" x1="603" y1="313" x2="887" y2="225" gradientUnits="userSpaceOnUse">
        <stop offset=".55" stopColor="#0a10e0" />
        <stop offset=".8" stopColor="#c02ce0" />
        <stop offset="1" stopColor="#ff3cdc" />
      </linearGradient>
      <linearGradient id="edge2" x1="887" y1="225" x2="988" y2="348" gradientUnits="userSpaceOnUse">
        <stop offset=".7" stopColor="#0a10e0" />
        <stop offset=".85" stopColor="#ff3cdc" />
      </linearGradient>
      <linearGradient id="edge3" x1="988" y1="348" x2="713" y2="435" gradientUnits="userSpaceOnUse">
        <stop offset=".25" stopColor="#1a10e0" />
        <stop offset=".6" stopColor="#a020d8" />
        <stop offset="1" stopColor="#f02cc8" />
      </linearGradient>
      <linearGradient id="edge4" x1="603" y1="313" x2="713" y2="435" gradientUnits="userSpaceOnUse">
        <stop offset=".15" stopColor="#ff3cdc" />
        <stop offset=".3" stopColor="#1a10e0" />
      </linearGradient>
    </defs>

    {/* cutter, holder and cone */}
    <path d="M522 246L509 296C507 318 530 335 560 335C580 335 592 327 594 314L607 262z" fill="url(#navy)" />
    <path d="M509 302C510 320 533 335 560 335Q583 334 592 320" fill="none" stroke="#b8a98b" />
    <ellipse cx="564.500" cy="254" rx="43" ry="28" transform="rotate(12 564.500 254)" fill="#1a3797" stroke="#3554bd" strokeWidth=".7" />
    <circle cx="551" cy="306" r="1.700" fill="#eee6be" />
    <path d="M545 196L534 247C534 263 550 274 567 274C581 274 592 268 594 259L604 210z" fill="url(#green)" stroke="#28ca29" strokeWidth=".8" />
    <path d="M541 215C542 231 557 241 575 242C588 242 599 239 602 230L600 241C595 247 586 249 574 248C555 246 540 235 541 215z" fill="#0a980c" stroke="#42ef43" strokeWidth=".8" />
    <path d="M541 220C543 234 557 244 574 245Q594 245 600 236" fill="none" stroke="#27c92a" strokeWidth=".8" />
    <path d="M538 169L536 181C538 202 560 217 587 217C608 217 624 210 626 200L629 183z" fill="#06820a" stroke="#37df38" strokeWidth=".8" />
    <path d="M539 168L537 176C540 199 563 213 589 213Q617 213 626 197L629 182z" fill="url(#flange)" stroke="#37df38" strokeWidth=".8" />
    <path d="M541 149L539 166C545 189 567 204 594 204Q618 203 629 188L632 167z" fill="#07880b" stroke="#2bd62d" strokeWidth=".8" />
    <ellipse cx="586.500" cy="160.500" rx="46" ry="30" transform="rotate(13 586.500 160.500)" fill="#09970b" stroke="#26ce29" strokeWidth=".8" />
    <path d="M587 87L557 148C553 166 576 182 602 181Q618 179 619 168L622 96z" fill="url(#cone)" stroke="#a3a3b9" strokeWidth=".5" />
    <ellipse cx="604.500" cy="91" rx="18" ry="12.500" transform="rotate(10 604.500 91)" fill="#454461" stroke="#c4c4ce" strokeWidth=".7" />

    {/* part */}
    <g stroke="#2b1c02" strokeWidth=".9" strokeLinejoin="round">
      <path d="M634 348L641 323L666 352L664 363L677 378L677 368L718 416L714 435z" fill="#935b00" />
      <path d="M641 323L881 249L905 278L666 352z" fill="#985e00" />
      <path d="M666 352L905 278L904 289L664 363z" fill="#5f3d00" />
      <path d="M664 363L904 289L909 295L677 368V378z" fill="#985e00" />
      <path d="M677 368L919 293L957 340L718 416z" fill="#985e00" />
      <path d="M718 416L957 341L952 366L714 435z" fill="#623e00" />
      <path d="M715 412L953 338" />
    </g>
    <path d="M952 359v6L735 430v-2z" fill="#8f5900" />
    <path d="M831 288h2M810 341h2M885 341h2M822 384h2M927 320h2M714 395h2" stroke="#f2d38f" />

    {/* machining contour */}
    <g fill="none" strokeWidth="1.600">
      <path d="M603 313L887 225" stroke="url(#edge1)" />
      <path d="M887 225L988 348" stroke="url(#edge2)" />
      <path d="M988 348L713 435" stroke="url(#edge3)" />
      <path d="M603 313L713 435" stroke="url(#edge4)" />
      <path d="M780 258L887 225M950 360L730 430" stroke="#3414d8" strokeDasharray="2 2" />
    </g>
    <path d="M714 432L727 376" stroke="#2c2cb0" strokeWidth="1.300" />
    <text x="726" y="374" fontSize="9" fill="#3434b5">Z</text>
    <path d="M665 382L708 437" stroke="#21b427" strokeWidth="1.500" />
    <path d="M685 410l7 9-8-3zM697 426l9 10 1 5z" fill="#10b51b" stroke="#10b51b" />
    <text x="661" y="384" fontSize="9" fill="#50b52d">Y</text>
    <path d="M690 434L721 429L732 446L707 454z" fill="#a9bdea" fillOpacity=".5" stroke="#111" />
    <path d="M705 425h38v9h-38z" fill="#4d1527" />
    <text x="706" y="432" fontSize="7" fontWeight="600" fill="#d71d72">Curve_abc</text>
    <circle cx="712" cy="441" r="5" fill="#d6d7ce" />
    <path d="M712 441v-5a5 5 0 0 1 5 5zM712 441v5a5 5 0 0 1-5-5z" fill="#222" />
    <text x="723" y="440" fontSize="8" fill="#202936">Context : [MACHINE_POSITION_1]</text>

    {/* orientation triad and scale */}
    <g strokeWidth="2.200">
      <path d="M317 612L302 595" stroke="#19a83a" />
      <path d="M317 612L322 593" stroke="#1c1c9e" />
      <path d="M317 612L340 606" stroke="#d52d37" />
    </g>
    <path d="M299 592l8 3-5 6z" fill="#16a838" />
    <path d="M322 589l4 9-8-1z" fill="#19199b" />
    <path d="M344 604l-8 5-2-6z" fill="#cc2733" />
    <circle cx="317" cy="613" r="3" fill="#eee51c" />
    <text x="291" y="589" fontSize="8" fill="#29913b">Y</text>
    <text x="322" y="585" fontSize="8" fill="#3d3da7">Z</text>
    <text x="350" y="606" fontSize="8" fill="#df3b4b">X</text>
    <text x="280" y="636" fontSize="8" fill="#222">Context : [MACHINE_POSITION_1]</text>
    <path d="M283.500 643v3.500H356v-3M298 646v-2M312 646v-2M327 646v-2M341 646v-2" fill="none" stroke="#222" />
    <text x="356" y="645" fontSize="8" fill="#333">50(mm)</text>
  </svg>
);

const Viewport: React.FC = () => (
  <main className="relative min-w-0 flex-1 bg-linear-to-b from-[#2d60c7] via-[#7797e2] to-[#d0d5fb]">
    <Scene />
    <div className="absolute top-1 left-[31px] flex flex-col gap-[3px]">
      <div className="flex gap-[3px]">
        {cubeTools.map((tool) => <ToolButton key={tool.label} tool={tool} size="view" />)}
      </div>
      <ToolButton
        size="view"
        tool={{
          label: 'XYZ view',
          art: (
            <g fontSize="11" fontWeight="800">
              <text x="1" y="9" fill="#e42d24">X</text>
              <text x="8" y="15" fill="#19a129">Y</text>
              <text x="15" y="21" fill="#1e2ed0">Z</text>
            </g>
          ),
        }}
      />
    </div>
  </main>
);

const coordinates = [
  { axis: 'X', value: '-177.8860mm' },
  { axis: 'Y', value: '197.0062mm' },
  { axis: 'Z', value: '25.0000mm', active: true },
];

const BottomBar: React.FC = () => (
  <footer className="relative shrink-0">
    <div className="flex h-8 items-center border-t border-[#8e9299] bg-[#f0f0f0] pb-[3px] text-[8px] text-[#222]">
      <div className="flex items-center pl-[5px]">
        <Icon><Path3d /><path d="M13 12l9 5-9 6z" fill="#2154a1" /><Pencil /></Icon>
        <div className="relative flex items-center">
          <select aria-label="Toolpath command" className="h-[14px] w-[176px] appearance-none border border-[#c4c4c4] bg-white">
            <option></option>
          </select>
          <Chevron />
        </div>
      </div>
      <Grip />
      <div className="flex items-center">
        {coordinates.map(({ axis, value, active }) => (
          <label key={axis} className="flex items-center">
            <span className={clsx('flex h-[26px] w-[15px] items-center justify-center text-xs text-black', active && 'border border-[#79b2de] bg-[#b0d6f5]')}>
              {axis}
            </span>
            <input type="text" defaultValue={value} className="h-[15px] w-[79px] border border-[#c8c8c8] bg-white px-[2px]" />
          </label>
        ))}
      </div>
      <WideGrip />
      <div className="flex items-center gap-[6px]">
        {queryTools.map((tool) => <ToolButton key={tool.label} tool={tool} size="h" />)}
      </div>
      <WideGrip />
      <div className="flex items-center gap-[6px]">
        {infoTools.map((tool) => <ToolButton key={tool.label} tool={tool} size="h" />)}
      </div>
      <WideGrip />
      <Icon size="lg">
        <path d="M3 2h12v14H3z" fill="#b9d3e7" stroke="#7897ad" />
        <path d="M5 5l2 2 3-4" stroke="#d44" />
        <path d="M5 14l9-6 7 5-10 9z" fill="#d3d458" stroke="#7e8434" />
        <path d="M16 12h6l-3 3h4l-8 7 2-5h-3z" fill="#ef9f2e" stroke="#c45e22" />
      </Icon>
      <div role="progressbar" aria-label="Calculation" className="mr-[2px] ml-1 h-[14px] flex-1 border border-[#58b863] bg-[#06b025]" />
    </div>
    <p className="h-[13px] bg-[#fbeea6] pl-px text-[8px] leading-[13px] font-semibold whitespace-pre text-[#302c1c]">
      {'Toolpath 1   Playing >>> [-->5 / 39]   Flat (60.00,0.00) Straight | Time : 5 min (rap 0 min, app 0 min, mach 5 min) |Tolerance=0.020'}
    </p>
    <div className="pointer-events-none absolute -top-[14px] right-14 flex flex-col leading-[15px] whitespace-nowrap text-[#9fa8c4]">
      <span className="text-[13px]">Activate Windows</span>
      <span className="text-[9px] text-[#a9b3b0]">Go to PC Settings to activate Windows.</span>
    </div>
  </footer>
);

const App: React.FC = () => (
  <div className="flex h-screen flex-col bg-black py-[22px] font-['Open_Sans','Noto_Sans',sans-serif]">
    <TopBar />
    <div className="relative flex min-h-0 flex-1">
      <LeftBar />
      <TreePanel />
      <Viewport />
      <RightBar />
      <ProgressDialog />
    </div>
    <BottomBar />
  </div>
);

export default App;
